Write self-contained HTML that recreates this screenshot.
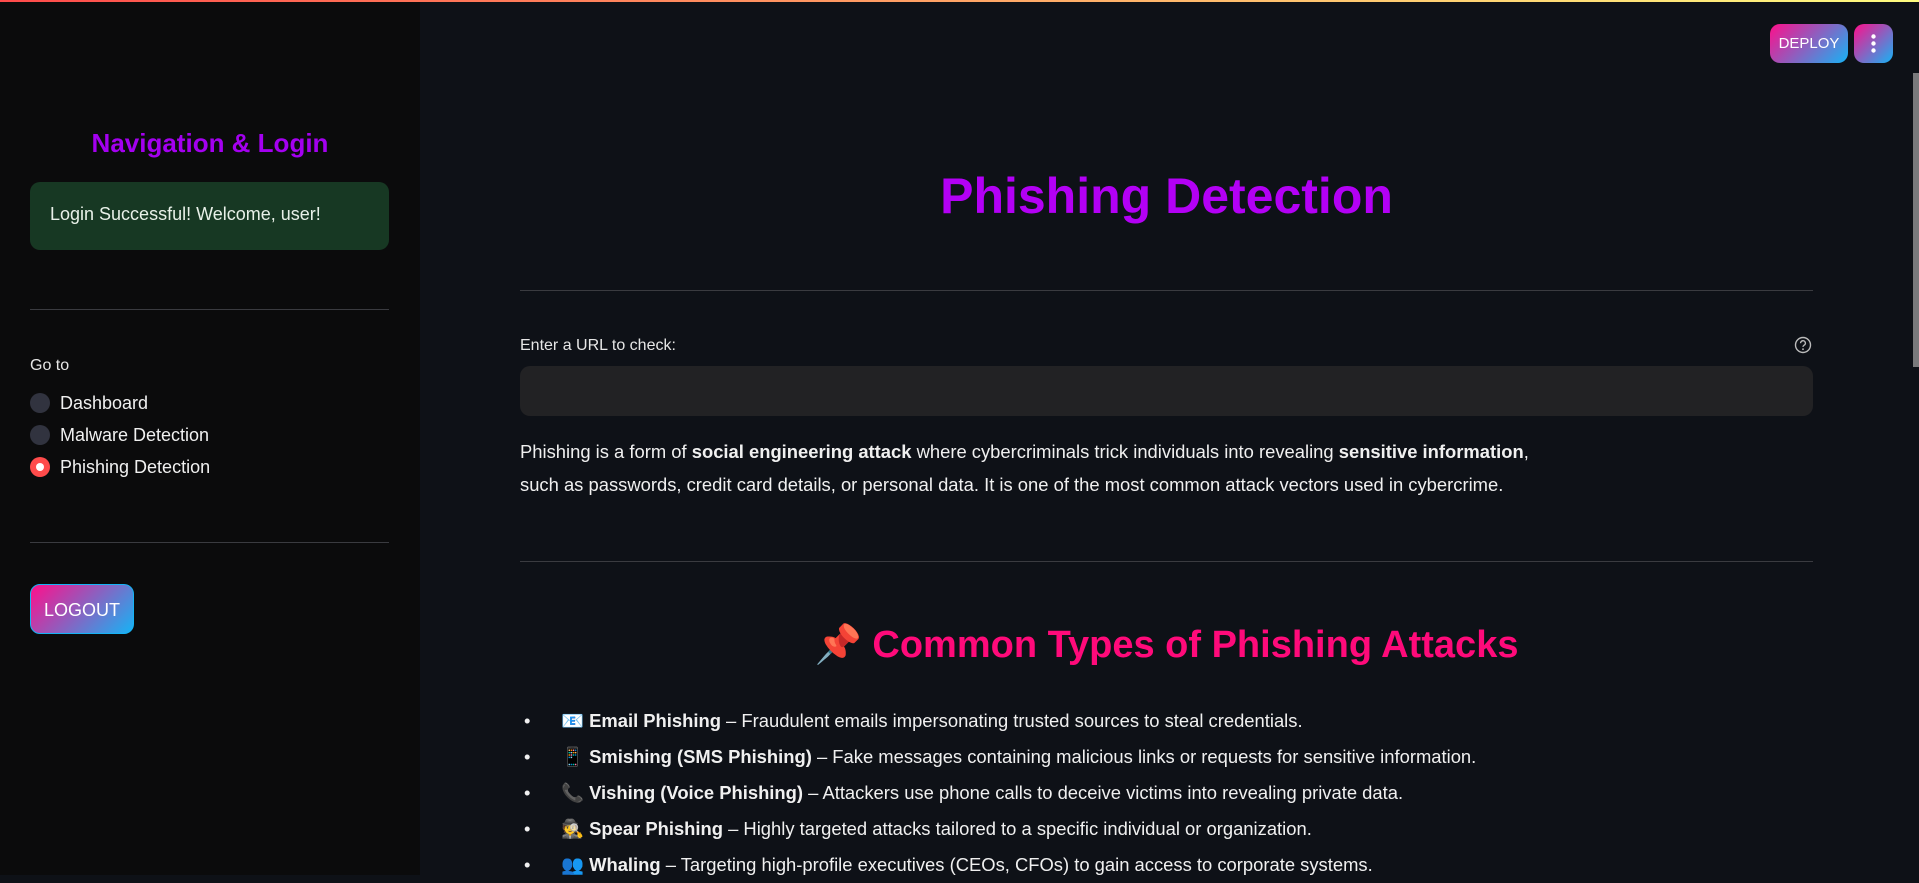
<!DOCTYPE html>
<html><head><meta charset="utf-8"><style>
*{box-sizing:border-box;margin:0;padding:0}
body{width:1919px;height:875px;overflow:hidden;background:#0e1117;font-family:"Liberation Sans",sans-serif;color:#fafafa;position:relative}
.topbar{position:absolute;left:0;top:0;width:1919px;height:2px;background:linear-gradient(90deg,#ff4b4b,#fffd80)}
.side{position:absolute;left:0;top:2px;width:420px;height:873px;background:#0b0b0c}
.abs{position:absolute}
.navt{left:0;width:420px;top:126px;text-align:center;font-size:26px;font-weight:bold;color:#a400f0}
.succ{left:30px;top:180px;width:359px;height:68px;background:#173823;border-radius:10px;font-size:18px;padding:22px 0 0 20px;color:#e8f0e8}
.hr{height:1px;background:#3a3b40}
.lbl{font-size:16px;color:#e6e6e6}
.rad{width:20px;height:20px;border-radius:50%;background:#31333f}
.rad.on{background:#ff4b4b}
.rad.on:after{content:"";position:absolute;left:6px;top:6px;width:8px;height:8px;border-radius:50%;background:#fff}
.ri{font-size:18px;color:#f0f0f0}
.grad{background:linear-gradient(135deg,#ff0f8b,#16b3f5);border-radius:10px;color:#fff}
.h1{left:520px;width:1293px;top:167px;text-align:center;font-size:50px;font-weight:bold;color:#b300f5}
.h2{left:520px;width:1293px;top:623px;text-align:center;font-size:38px;font-weight:bold;color:#ff0a7a}
.p{left:520px;font-size:18.4px;color:#f0f0f0;white-space:nowrap}
</style></head><body>
<div class="topbar"></div>
<div class="side">
 <div class="abs navt">Navigation &amp; Login</div>
 <div class="abs succ">Login Successful! Welcome, user!</div>
 <div class="abs hr" style="left:30px;top:307px;width:359px"></div>
 <div class="abs lbl" style="left:30px;top:355px">Go to</div>
 <div class="abs rad" style="left:30px;top:391px"></div><div class="abs ri" style="left:60px;top:391px">Dashboard</div>
 <div class="abs rad" style="left:30px;top:423px"></div><div class="abs ri" style="left:60px;top:423px">Malware Detection</div>
 <div class="abs rad on" style="left:30px;top:455px"></div><div class="abs ri" style="left:60px;top:455px">Phishing Detection</div>
 <div class="abs hr" style="left:30px;top:540px;width:359px"></div>
 <div class="abs grad" style="left:30px;top:582px;width:104px;height:50px;font-size:18px;text-align:center;line-height:50px;border:1px solid #16b3f5">LOGOUT</div>
</div>
<div class="abs grad" style="left:1770px;top:24px;width:78px;height:39px;font-size:15px;text-align:center;line-height:39px">DEPLOY</div>
<div class="abs grad" style="left:1854px;top:24px;width:39px;height:39px;text-align:center"><svg width="39" height="39"><circle cx="19.5" cy="12.5" r="2.2" fill="#fff"/><circle cx="19.5" cy="19.5" r="2.2" fill="#fff"/><circle cx="19.5" cy="26.5" r="2.2" fill="#fff"/></svg></div>
<div class="abs" style="left:1913px;top:73px;width:6px;height:294px;background:#7a7a7c"></div>
<div class="abs h1">Phishing Detection</div>
<div class="abs hr" style="left:520px;top:290px;width:1293px"></div>
<div class="abs" style="left:520px;top:337px;font-size:16px;color:#e6e6e6">Enter a URL to check:</div>
<svg class="abs" style="left:1794px;top:336px" width="18" height="18"><circle cx="9" cy="9" r="7.5" fill="none" stroke="#bbb" stroke-width="1.4"/><path d="M6.6 7.2a2.4 2.4 0 1 1 3.4 2.1c-.7.4-1 .8-1 1.6" fill="none" stroke="#bbb" stroke-width="1.4"/><circle cx="9" cy="13.2" r=".9" fill="#bbb"/></svg>
<div class="abs" style="left:520px;top:366px;width:1293px;height:50px;background:#222224;border-radius:10px"></div>
<div class="abs p" style="top:441px">Phishing is a form of <b>social engineering attack</b> where cybercriminals trick individuals into revealing <b>sensitive information</b>,</div>
<div class="abs p" style="top:474px">such as passwords, credit card details, or personal data. It is one of the most common attack vectors used in cybercrime.</div>
<div class="abs hr" style="left:520px;top:561px;width:1293px"></div>
<div class="abs h2">📌 Common Types of Phishing Attacks</div>
<div class="abs" style="left:524px;top:703px;font-size:18.4px;color:#f0f0f0;white-space:nowrap;line-height:36px">
<div>•&nbsp;&nbsp;&nbsp;&nbsp;&nbsp;&nbsp;📧 <b>Email Phishing</b> – Fraudulent emails impersonating trusted sources to steal credentials.</div>
<div>•&nbsp;&nbsp;&nbsp;&nbsp;&nbsp;&nbsp;📱 <b>Smishing (SMS Phishing)</b> – Fake messages containing malicious links or requests for sensitive information.</div>
<div>•&nbsp;&nbsp;&nbsp;&nbsp;&nbsp;&nbsp;📞 <b>Vishing (Voice Phishing)</b> – Attackers use phone calls to deceive victims into revealing private data.</div>
<div>•&nbsp;&nbsp;&nbsp;&nbsp;&nbsp;&nbsp;🕵 <b>Spear Phishing</b> – Highly targeted attacks tailored to a specific individual or organization.</div>
<div>•&nbsp;&nbsp;&nbsp;&nbsp;&nbsp;&nbsp;👥 <b>Whaling</b> – Targeting high-profile executives (CEOs, CFOs) to gain access to corporate systems.</div>
</div>
</body></html>
